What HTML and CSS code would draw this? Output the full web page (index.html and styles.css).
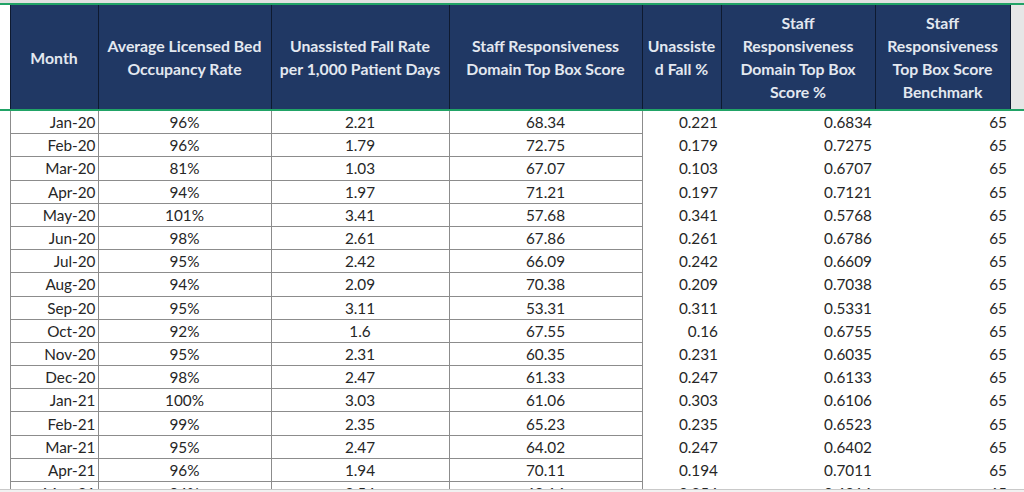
FILE: index.html
```html
<!DOCTYPE html>
<html>
<head>
<meta charset="utf-8">
<link rel="stylesheet" href="styles.css">
</head>
<body>
<div class="topbar"></div>
<div class="sheet">
<table class="grid">
<colgroup>
<col class="c-gutter"><col class="c-month"><col class="c-occ"><col class="c-fall"><col class="c-staff"><col class="c-fallp"><col class="c-staffp"><col class="c-bench"><col class="c-filler">
</colgroup>
<thead>
<tr>
<th class="gutter"></th>
<th>Month</th>
<th>Average Licensed Bed<br>Occupancy Rate</th>
<th>Unassisted Fall Rate<br>per 1,000 Patient Days</th>
<th>Staff Responsiveness<br>Domain Top Box Score</th>
<th>Unassiste<br>d Fall %</th>
<th>Staff<br>Responsiveness<br>Domain Top Box<br>Score %</th>
<th>Staff<br>Responsiveness<br>Top Box Score<br>Benchmark</th>
<th class="filler"></th>
</tr>
</thead>
<tbody>
<tr><td class="gutter"></td><td class="b month">Jan-20</td><td class="b mid">96%</td><td class="b mid">2.21</td><td class="b mid">68.34</td><td class="num">0.221</td><td class="num">0.6834</td><td class="num">65</td><td class="filler"></td></tr>
<tr><td class="gutter"></td><td class="b month">Feb-20</td><td class="b mid">96%</td><td class="b mid">1.79</td><td class="b mid">72.75</td><td class="num">0.179</td><td class="num">0.7275</td><td class="num">65</td><td class="filler"></td></tr>
<tr><td class="gutter"></td><td class="b month">Mar-20</td><td class="b mid">81%</td><td class="b mid">1.03</td><td class="b mid">67.07</td><td class="num">0.103</td><td class="num">0.6707</td><td class="num">65</td><td class="filler"></td></tr>
<tr><td class="gutter"></td><td class="b month">Apr-20</td><td class="b mid">94%</td><td class="b mid">1.97</td><td class="b mid">71.21</td><td class="num">0.197</td><td class="num">0.7121</td><td class="num">65</td><td class="filler"></td></tr>
<tr><td class="gutter"></td><td class="b month">May-20</td><td class="b mid">101%</td><td class="b mid">3.41</td><td class="b mid">57.68</td><td class="num">0.341</td><td class="num">0.5768</td><td class="num">65</td><td class="filler"></td></tr>
<tr><td class="gutter"></td><td class="b month">Jun-20</td><td class="b mid">98%</td><td class="b mid">2.61</td><td class="b mid">67.86</td><td class="num">0.261</td><td class="num">0.6786</td><td class="num">65</td><td class="filler"></td></tr>
<tr><td class="gutter"></td><td class="b month">Jul-20</td><td class="b mid">95%</td><td class="b mid">2.42</td><td class="b mid">66.09</td><td class="num">0.242</td><td class="num">0.6609</td><td class="num">65</td><td class="filler"></td></tr>
<tr><td class="gutter"></td><td class="b month">Aug-20</td><td class="b mid">94%</td><td class="b mid">2.09</td><td class="b mid">70.38</td><td class="num">0.209</td><td class="num">0.7038</td><td class="num">65</td><td class="filler"></td></tr>
<tr><td class="gutter"></td><td class="b month">Sep-20</td><td class="b mid">95%</td><td class="b mid">3.11</td><td class="b mid">53.31</td><td class="num">0.311</td><td class="num">0.5331</td><td class="num">65</td><td class="filler"></td></tr>
<tr><td class="gutter"></td><td class="b month">Oct-20</td><td class="b mid">92%</td><td class="b mid">1.6</td><td class="b mid">67.55</td><td class="num">0.16</td><td class="num">0.6755</td><td class="num">65</td><td class="filler"></td></tr>
<tr><td class="gutter"></td><td class="b month">Nov-20</td><td class="b mid">95%</td><td class="b mid">2.31</td><td class="b mid">60.35</td><td class="num">0.231</td><td class="num">0.6035</td><td class="num">65</td><td class="filler"></td></tr>
<tr><td class="gutter"></td><td class="b month">Dec-20</td><td class="b mid">98%</td><td class="b mid">2.47</td><td class="b mid">61.33</td><td class="num">0.247</td><td class="num">0.6133</td><td class="num">65</td><td class="filler"></td></tr>
<tr><td class="gutter"></td><td class="b month">Jan-21</td><td class="b mid">100%</td><td class="b mid">3.03</td><td class="b mid">61.06</td><td class="num">0.303</td><td class="num">0.6106</td><td class="num">65</td><td class="filler"></td></tr>
<tr><td class="gutter"></td><td class="b month">Feb-21</td><td class="b mid">99%</td><td class="b mid">2.35</td><td class="b mid">65.23</td><td class="num">0.235</td><td class="num">0.6523</td><td class="num">65</td><td class="filler"></td></tr>
<tr><td class="gutter"></td><td class="b month">Mar-21</td><td class="b mid">95%</td><td class="b mid">2.47</td><td class="b mid">64.02</td><td class="num">0.247</td><td class="num">0.6402</td><td class="num">65</td><td class="filler"></td></tr>
<tr><td class="gutter"></td><td class="b month">Apr-21</td><td class="b mid">96%</td><td class="b mid">1.94</td><td class="b mid">70.11</td><td class="num">0.194</td><td class="num">0.7011</td><td class="num">65</td><td class="filler"></td></tr>
<tr><td class="gutter"></td><td class="b month">May-21</td><td class="b mid">94%</td><td class="b mid">2.54</td><td class="b mid">68.16</td><td class="num">0.254</td><td class="num">0.6816</td><td class="num">65</td><td class="filler"></td></tr>
</tbody>
</table>
</div>
<div class="bottombar"></div>
</body>
</html>
```
FILE: styles.css
```css
html, body {
  margin: 0;
  padding: 0;
  background: #ffffff;
}
body {
  width: 1024px;
  height: 492px;
  overflow: hidden;
  font-family: Lato, "Liberation Sans", sans-serif;
}
.topbar {
  height: 3px;
  background: #e1e1e1;
  border-bottom: 2px solid #21a366;
}
.sheet {
  height: 484px;
  overflow: hidden;
}
.bottombar {
  height: 2px;
  background: #f1f1f1;
  border-top: 1px solid #c9c9c9;
}
.grid {
  width: 1024px;
  table-layout: fixed;
  border-collapse: collapse;
  border-spacing: 0;
}
.c-gutter { width: 10px; }
.c-month { width: 88px; }
.c-occ { width: 173px; }
.c-fall { width: 178px; }
.c-staff { width: 193px; }
.c-fallp { width: 79px; }
.c-staffp { width: 154px; }
.c-bench { width: 135px; }
.c-filler { width: 14px; }

.grid th {
  height: 104px;
  padding: 0 1px;
  background: #203864;
  color: #e3e8f0;
  font-size: 15.8px;
  font-weight: 700;
  line-height: 23px;
  text-align: center;
  vertical-align: middle;
  border: 1px solid #0e1a30;
  border-bottom: 2px solid #21a366;
  border-top: none;
  white-space: nowrap;
}
.grid th.gutter {
  background: #ffffff;
  border-left: none;
  border-top: none;
}
.grid th.filler {
  background: #e6e6e6;
  border-right: none;
}
.grid td {
  height: 22.2px;
  padding: 0 3px;
  font-size: 15.3px;
  line-height: 20px;
  color: #262626;
  border: none;
  white-space: nowrap;
}
.grid td.b {
  border: 1px solid #8c8c8c;
}
.grid td.month {
  text-align: right;
  padding-right: 2px;
}
.grid td.mid {
  text-align: center;
}
.grid td.num {
  text-align: right;
}
```
